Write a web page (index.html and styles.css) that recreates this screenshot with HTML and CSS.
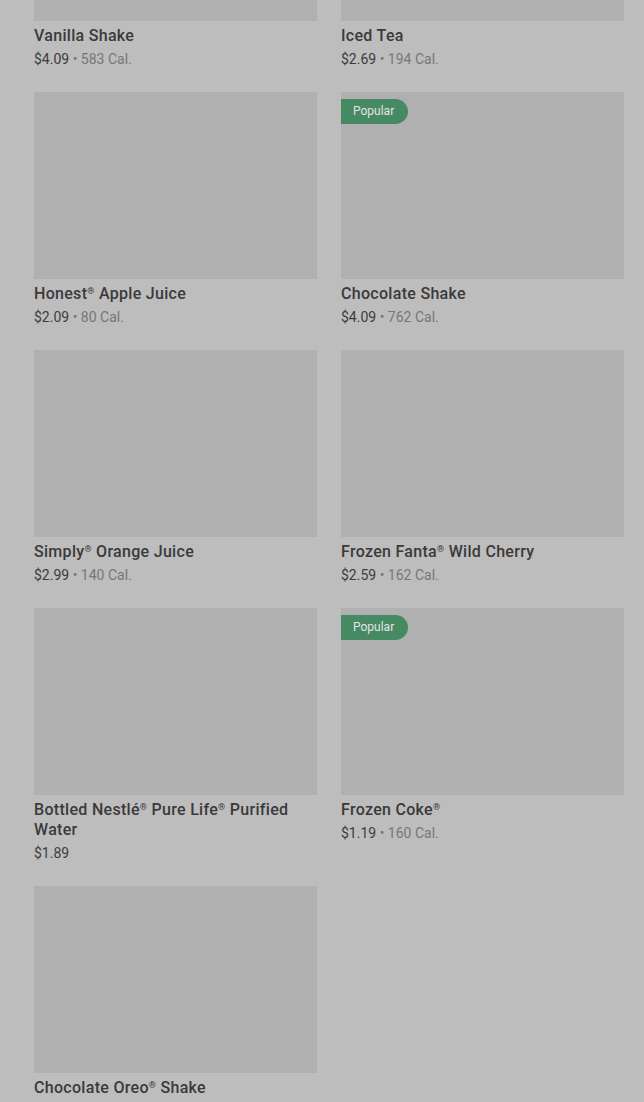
FILE: index.html
```html
<!DOCTYPE html>
<html lang="en">
<head>
    <meta charset="UTF-8">
    <meta name="viewport" content="width=device-width, initial-scale=1.0">
    <title>Drinks</title>
    <link rel="stylesheet" href="styles.css">
</head>
<body>

<div class="menu-grid">
    <div class="item">
        <div class="item-image"></div>
        <div class="item-name">Vanilla Shake</div>
        <div class="item-info">$4.09 <span class="cal">• 583 Cal.</span></div>
    </div>
    <div class="item">
        <div class="item-image"></div>
        <div class="item-name">Iced Tea</div>
        <div class="item-info">$2.69 <span class="cal">• 194 Cal.</span></div>
    </div>

    <div class="item">
        <div class="item-image"></div>
        <div class="item-name">Honest<sup class="reg">®</sup> Apple Juice</div>
        <div class="item-info">$2.09 <span class="cal">• 80 Cal.</span></div>
    </div>
    <div class="item">
        <div class="item-image">
            <span class="badge">Popular</span>
        </div>
        <div class="item-name">Chocolate Shake</div>
        <div class="item-info">$4.09 <span class="cal">• 762 Cal.</span></div>
    </div>

    <div class="item">
        <div class="item-image"></div>
        <div class="item-name">Simply<sup class="reg">®</sup> Orange Juice</div>
        <div class="item-info">$2.99 <span class="cal">• 140 Cal.</span></div>
    </div>
    <div class="item">
        <div class="item-image"></div>
        <div class="item-name">Frozen Fanta<sup class="reg">®</sup> Wild Cherry</div>
        <div class="item-info">$2.59 <span class="cal">• 162 Cal.</span></div>
    </div>

    <div class="item">
        <div class="item-image"></div>
        <div class="item-name">Bottled Nestlé<sup class="reg">®</sup> Pure Life<sup class="reg">®</sup> Purified Water</div>
        <div class="item-info">$1.89</div>
    </div>
    <div class="item">
        <div class="item-image">
            <span class="badge">Popular</span>
        </div>
        <div class="item-name">Frozen Coke<sup class="reg">®</sup></div>
        <div class="item-info">$1.19 <span class="cal">• 160 Cal.</span></div>
    </div>

    <div class="item">
        <div class="item-image"></div>
        <div class="item-name">Chocolate Oreo<sup class="reg">®</sup> Shake</div>
    </div>
</div>

</body>
</html>
```

FILE: styles.css
```css
body {
    margin: 0;
    padding: 0;
    background-color: #bdbdbd;
    font-family: Roboto, 'Liberation Sans', sans-serif;
    overflow: hidden;
}

.menu-grid {
    display: grid;
    grid-template-columns: 283px 283px;
    column-gap: 24px;
    padding: 0 20px 0 34px;
    margin-top: -166px;
}

.item {
    margin-bottom: 23px;
}

.item-image {
    height: 187px;
    background-color: #b0b0b0;
    position: relative;
    margin-bottom: 5px;
}

.badge {
    position: absolute;
    top: 7px;
    left: 0;
    height: 25px;
    line-height: 25px;
    padding: 0 14px 0 12px;
    background-color: #468a63;
    color: #e4e4e4;
    font-size: 12px;
    border-radius: 0 13px 13px 0;
}

.item-name {
    font-size: 16px;
    line-height: 20px;
    font-weight: 500;
    letter-spacing: 0.3px;
    color: #3a3a3a;
}

.reg {
    font-size: 9px;
    vertical-align: top;
    line-height: 14px;
}

.item-info {
    margin-top: 3px;
    font-size: 14px;
    line-height: 20px;
    color: #3c3c3c;
}

.cal {
    color: #777;
}
```
